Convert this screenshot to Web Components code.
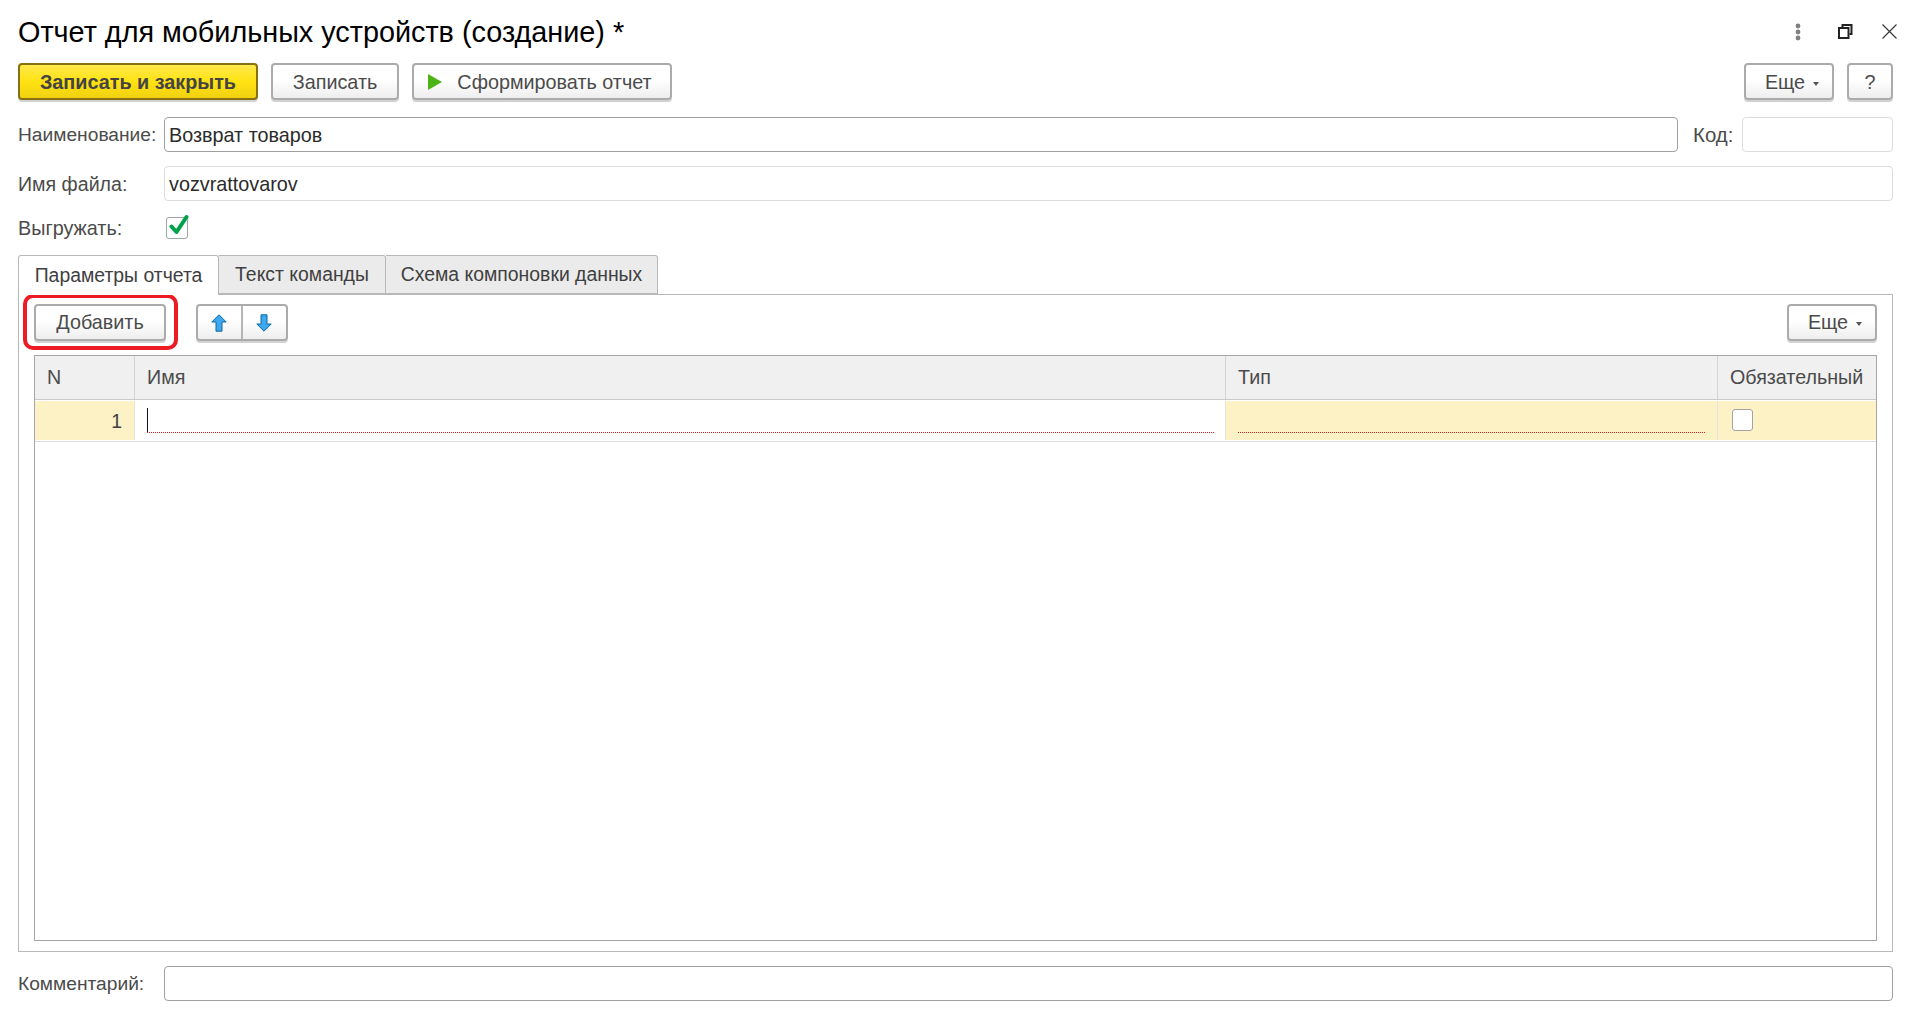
<!DOCTYPE html>
<html lang="ru">
<head>
<meta charset="utf-8">
<title>Отчет для мобильных устройств</title>
<style>
  html, body { margin: 0; height: 100%; background: #fff; overflow: hidden; }
  body { font: 19.4px "Liberation Sans", Arial, sans-serif; color: #4b4b4b; }
</style>
</head>
<body>
<report-form></report-form>

<script>
class AppButton extends HTMLElement {
  constructor() {
    super();
    this.attachShadow({ mode: 'open' });
    this.shadowRoot.innerHTML = `
      <style>
        :host { display: inline-block; height: 39px; }
        button {
          box-sizing: border-box;
          width: 100%;
          height: 37px;
          display: flex;
          align-items: center;
          justify-content: center;
          gap: 14px;
          padding: var(--btn-pad, 1px 0 0);
          border: 2px solid #ababab;
          border-radius: 4px;
          background: linear-gradient(#fff 45%, #eee);
          box-shadow: 0 2px 0 #d2d2d2;
          color: #4b4b4b;
          font: inherit;
          font-size: 19.8px;
        }
        :host([primary]) button {
          border-color: #86700f;
          background: linear-gradient(#ffe94d, #ffe212 50%, #f0d110);
          color: #444;
          font-weight: 700;
        }
      </style>
      <button type="button"><slot name="icon"></slot><slot></slot></button>
    `;
  }
}
customElements.define('app-button', AppButton);

class MoreButton extends HTMLElement {
  constructor() {
    super();
    this.attachShadow({ mode: 'open' });
    this.shadowRoot.innerHTML = `
      <style>
        :host { display: block; }
        span { display: inline-flex; align-items: center; gap: 8px; margin-left: 6px; }
        i { width: 0; height: 0; margin-top: 3px; border: 3.5px solid transparent; border-top: 4px solid #555; border-bottom: 0; }
      </style>
      <app-button style="width:100%"><span>Еще<i></i></span></app-button>
    `;
  }
}
customElements.define('more-button', MoreButton);

class FormField extends HTMLElement {
  static get observedAttributes() { return ['label', 'value', 'active']; }

  constructor() {
    super();
    this.attachShadow({ mode: 'open' });
    this.shadowRoot.innerHTML = `
      <style>
        :host { display: flex; align-items: center; height: 35px; }
        label { flex: none; width: var(--label-width, 146px); padding-top: 1px; font-size: var(--label-size, 19.2px); white-space: nowrap; }
        .box {
          flex: 1;
          box-sizing: border-box;
          height: 100%;
          display: flex;
          align-items: center;
          padding: 1px 4px 0;
          border: 1px solid #dcdcdc;
          border-radius: 4px;
          background: #fff;
          color: #2b2b2b;
          font-size: 19.8px;
        }
        :host([active]) .box { border-color: #a0a0a0; }
      </style>
      <label></label><div class="box"></div>
    `;
  }

  connectedCallback() { this.render(); }
  attributeChangedCallback() { this.render(); }

  render() {
    this.shadowRoot.querySelector('label').textContent = this.getAttribute('label') ?? '';
    this.shadowRoot.querySelector('.box').textContent = this.getAttribute('value') ?? '';
  }
}
customElements.define('form-field', FormField);

class TabStrip extends HTMLElement {
  constructor() {
    super();
    this.attachShadow({ mode: 'open' });
    this.shadowRoot.innerHTML = `
      <style>
        :host { display: flex; height: 40px; position: relative; z-index: 1; }
        div {
          box-sizing: border-box;
          height: 39px;
          display: flex;
          align-items: center;
          justify-content: center;
          border: 1px solid #b8b8b8;
          border-left: 0;
          border-radius: 0 3px 0 0;
          background: #ebebeb;
          color: #404040;
          white-space: nowrap;
        }
        .on {
          height: 40px;
          padding-bottom: 1px;
          border-left: 1px solid #b8b8b8;
          border-bottom: 0;
          border-radius: 3px 3px 0 0;
          background: #fff;
        }
      </style>
      <div class="on" style="width:201px">Параметры отчета</div>
      <div style="width:167px">Текст команды</div>
      <div style="width:272px">Схема компоновки данных</div>
    `;
  }
}
customElements.define('tab-strip', TabStrip);

class ArrowPair extends HTMLElement {
  constructor() {
    super();
    this.attachShadow({ mode: 'open' });
    this.shadowRoot.innerHTML = `
      <style>
        :host { display: block; width: 92px; height: 39px; }
        .pair {
          box-sizing: border-box;
          height: 37px;
          display: flex;
          border: 2px solid #ababab;
          border-radius: 4px;
          background: linear-gradient(#fff 45%, #eee);
          box-shadow: 0 2px 0 #d2d2d2;
        }
        .pair > div { flex: 1; display: flex; align-items: center; justify-content: center; padding-right: 1px; }
        .pair > div:first-child { flex: none; width: 45px; box-sizing: border-box; padding-right: 2px; border-right: 2px solid #b5b5b5; }
      </style>
      <div class="pair">
        <div>
          <svg width="16" height="18" viewBox="0 0 16 18"><path d="M8 .8 15.2 8H11v9.2H5V8H.8Z" fill="#3ea8ee" stroke="#0d6ba3"/></svg>
        </div>
        <div>
          <svg width="16" height="18" viewBox="0 0 16 18"><path d="M8 17.2 15.2 10H11V.8H5V10H.8Z" fill="#3ea8ee" stroke="#0d6ba3"/></svg>
        </div>
      </div>
    `;
  }
}
customElements.define('arrow-pair', ArrowPair);

class ParamGrid extends HTMLElement {
  constructor() {
    super();
    this.attachShadow({ mode: 'open' });
    this.shadowRoot.innerHTML = `
      <style>
        :host {
          display: block;
          box-sizing: border-box;
          border: 1px solid #a6a6a6;
          background: #fff;
        }
        .row { display: grid; grid-template-columns: 100px 1091px 492px 1fr; }
        .head { height: 43px; border-bottom: 1px solid #c9c9c9; font-size: 19.7px; }
        .head div {
          box-sizing: border-box;
          display: flex;
          align-items: center;
          padding: 0 12px 1px;
          background: #f0f0f0;
          border-right: 1px solid #d4d4d4;
          white-space: nowrap;
        }
        .head div:last-child { border-right: 0; }
        .data { box-sizing: border-box; height: 42px; padding-top: 1px; border-bottom: 1px solid #dcdcdc; }
        .data > div { box-sizing: border-box; border-right: 1px solid #e4e4e4; position: relative; height: 39px; }
        .data > div:last-child { border-right: 0; }
        .n { background: #fdf1c6; color: #404040; text-align: right; padding: 0 12px; line-height: 41px; }
        .y { background: #fdf1c6; }
        .line { position: absolute; left: 12px; right: 11px; bottom: 7px; border-bottom: 1px dotted #d9201f; }
        .y .line { right: 12px; }
        .caret { position: absolute; left: 12px; top: 7px; width: 1px; height: 25px; background: #111; }
        .check {
          position: absolute;
          left: 14px;
          top: 8px;
          box-sizing: border-box;
          width: 21px;
          height: 22px;
          border: 1px solid #a3a3a3;
          border-radius: 3px;
          background: #fff;
        }
      </style>
      <div class="row head">
        <div>N</div><div>Имя</div><div>Тип</div><div>Обязательный</div>
      </div>
      <div class="row data">
        <div class="n">1</div>
        <div><span class="caret"></span><span class="line"></span></div>
        <div class="y"><span class="line"></span></div>
        <div class="y"><span class="check"></span></div>
      </div>
    `;
  }
}
customElements.define('param-grid', ParamGrid);

class ReportForm extends HTMLElement {
  constructor() {
    super();
    this.attachShadow({ mode: 'open' });
    this.shadowRoot.innerHTML = `
      <style>
        :host { display: block; box-sizing: border-box; height: 1016px; padding: 0 27px 0 18px; }
        .title { display: flex; align-items: center; height: 63px; }
        h1 { flex: 1; margin: 1px 0 0; font-size: 28.8px; font-weight: 400; color: #000; white-space: nowrap; }
        .wins { display: flex; align-items: center; margin-right: -4px; }
        .bar { display: flex; height: 54px; }
        .bar app-button { margin-right: 13px; }
        .spacer { flex: 1; }
        .row { display: flex; align-items: center; }
        .mt { margin-top: 14px; }
        .check-row { display: flex; align-items: center; height: 22px; margin-top: 16px; font-size: 19.8px; }
        .check-row span { width: 148px; }
        .check {
          box-sizing: border-box;
          width: 22px;
          height: 22px;
          border: 1px solid #a3a3a3;
          border-radius: 3px;
          position: relative;
        }
        .check svg { position: absolute; left: 2px; top: -4px; }
        tab-strip { margin-top: 16px; }
        .panel {
          box-sizing: border-box;
          height: 658px;
          margin-top: -1px;
          padding: 9px 15px 10px;
          border: 1px solid #b8b8b8;
          display: flex;
          flex-direction: column;
        }
        .tools { display: flex; height: 51px; flex: none; --btn-pad: 0; }
        .highlight { position: relative; width: 132px; margin-right: 30px; }
        .highlight::after {
          content: '';
          position: absolute;
          left: -11px;
          top: -10px;
          box-sizing: border-box;
          width: 155px;
          height: 56px;
          border: 4px solid #ed1c24;
          border-radius: 10px;
        }
        .highlight app-button { width: 100%; }
        param-grid { flex: 1; }
      </style>
      <div class="title">
        <h1>Отчет для мобильных устройств (создание) *</h1>
        <div class="wins">
          <svg width="6" height="18" viewBox="0 0 6 18" style="margin-right:37px"><g fill="#808080"><circle cx="3" cy="3" r="2.4"/><circle cx="3" cy="9" r="2.4"/><circle cx="3" cy="15" r="2.4"/></g></svg>
          <svg width="15" height="15" viewBox="0 0 15 15" style="margin-right:29px" fill="none" stroke="#222" stroke-width="2"><path d="M4.5 3V1h9v9h-2"/><rect x="1" y="4" width="9.5" height="10"/></svg>
          <svg width="15" height="15" viewBox="0 0 15 15" stroke="#333" stroke-width="1.1"><path d="M.5.5 14.5 14.5M14.5.5.5 14.5"/></svg>
        </div>
      </div>
      <div class="bar">
        <app-button primary style="width:240px">Записать и закрыть</app-button>
        <app-button style="width:128px">Записать</app-button>
        <app-button style="width:260px;--btn-pad:1px 4px 0 0">
          <svg slot="icon" width="14" height="16" viewBox="0 0 14 16" style="margin-right:1px"><path d="M0 0 14 8 0 16Z" fill="#4eb415"/></svg>
          Сформировать отчет
        </app-button>
        <span class="spacer"></span>
        <more-button style="width:90px;margin-right:13px"></more-button>
        <app-button style="width:46px;margin-right:0;color:#222">?</app-button>
      </div>
      <div class="row">
        <form-field label="Наименование:" value="Возврат товаров" active style="width:1660px"></form-field>
        <form-field label="Код:" style="--label-width:49px;--label-size:20.4px;margin-left:15px;flex:1"></form-field>
      </div>
      <form-field class="mt" label="Имя файла:" value="vozvrattovarov" style="--label-size:19.6px"></form-field>
      <div class="check-row">
        <span>Выгружать:</span>
        <div class="check">
          <svg width="20" height="24" viewBox="0 0 20 24"><path d="M2.5 12.5 7.5 18 17.5 3" fill="none" stroke="#00a14b" stroke-width="4" stroke-linecap="round" stroke-linejoin="round"/></svg>
        </div>
      </div>
      <tab-strip></tab-strip>
      <div class="panel">
        <div class="tools">
          <div class="highlight"><app-button>Добавить</app-button></div>
          <arrow-pair></arrow-pair>
          <span class="spacer"></span>
          <more-button style="width:90px"></more-button>
        </div>
        <param-grid></param-grid>
      </div>
      <form-field class="mt" label="Комментарий:" active></form-field>
    `;
  }
}
customElements.define('report-form', ReportForm);
</script>
</body>
</html>
